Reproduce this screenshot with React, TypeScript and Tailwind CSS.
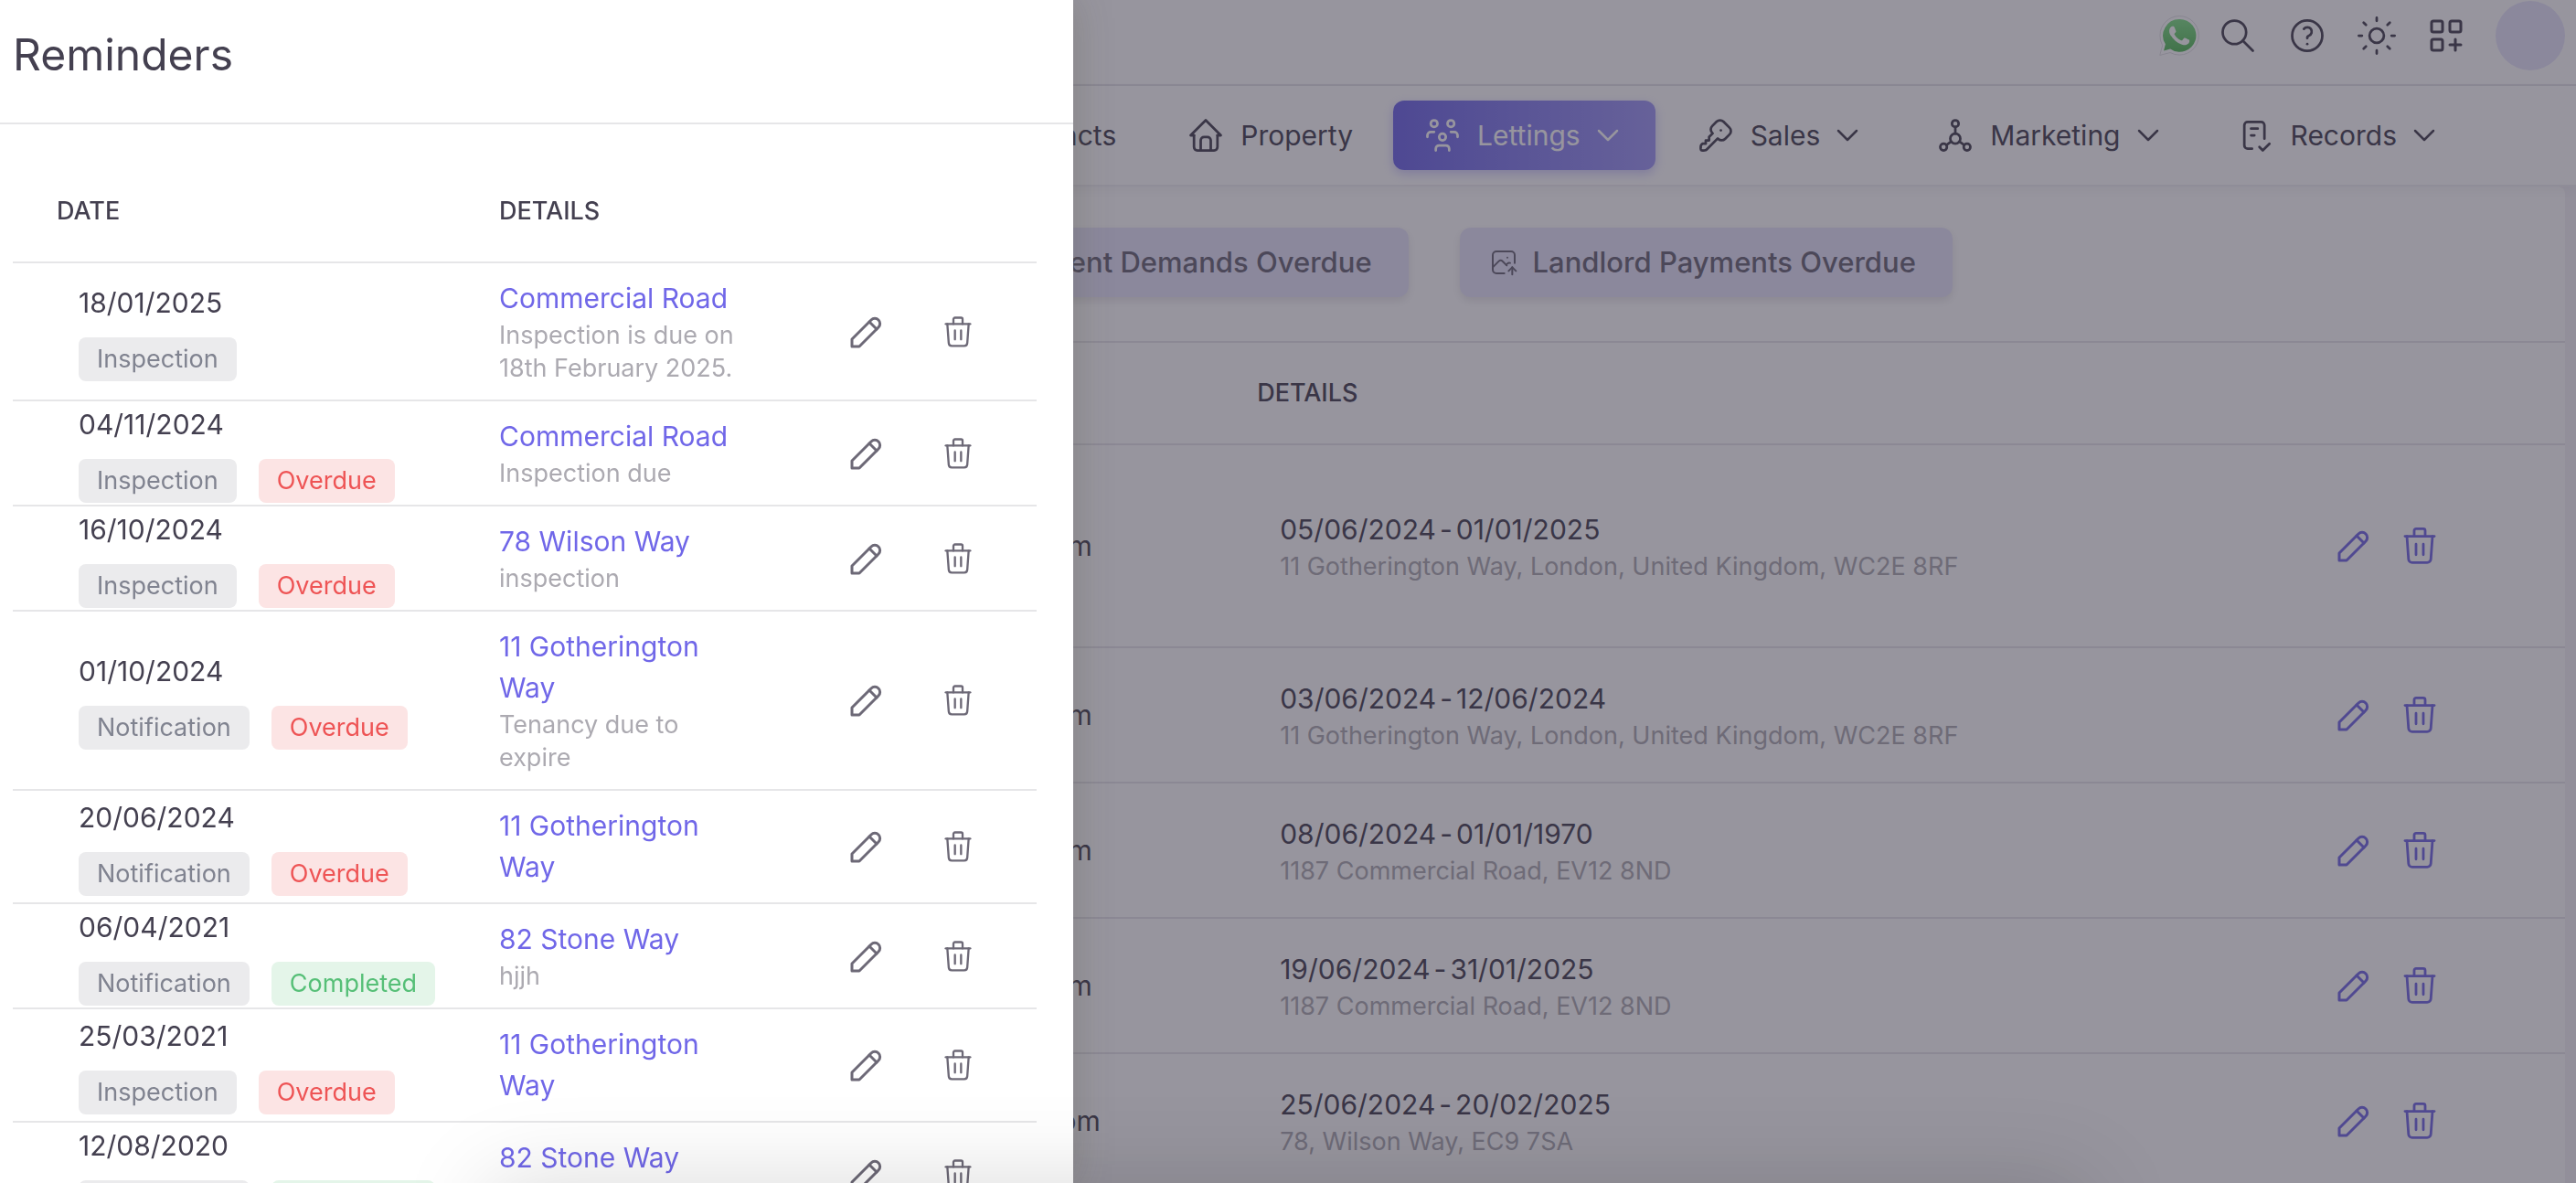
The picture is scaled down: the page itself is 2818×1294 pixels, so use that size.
import React from 'react';
import type { IconType } from 'react-icons';
import {
  TbAddressBook,
  TbChecklist,
  TbChevronDown,
  TbHelp,
  TbHome,
  TbKey,
  TbLayoutGridAdd,
  TbPencil,
  TbPhotoUp,
  TbSearch,
  TbSocial,
  TbUsersGroup,
} from 'react-icons/tb';

type Status = 'Overdue' | 'Completed';

interface Reminder {
  date: string;
  type: 'Inspection' | 'Notification';
  status?: Status;
  property: string;
  note?: string;
}

interface Tenancy {
  email: string;
  start: string;
  end: string;
  address: string;
  tall?: boolean;
}

interface NavItem {
  label: string;
  icon: IconType;
  menu?: boolean;
  active?: boolean;
}

const REMINDERS: Reminder[] = [
  { date: '18/01/2025', type: 'Inspection', property: 'Commercial Road', note: 'Inspection is due on 18th February 2025.' },
  { date: '04/11/2024', type: 'Inspection', status: 'Overdue', property: 'Commercial Road', note: 'Inspection due' },
  { date: '16/10/2024', type: 'Inspection', status: 'Overdue', property: '78 Wilson Way', note: 'inspection' },
  { date: '01/10/2024', type: 'Notification', status: 'Overdue', property: '11 Gotherington Way', note: 'Tenancy due to expire' },
  { date: '20/06/2024', type: 'Notification', status: 'Overdue', property: '11 Gotherington Way' },
  { date: '06/04/2021', type: 'Notification', status: 'Completed', property: '82 Stone Way', note: 'hjjh' },
  { date: '25/03/2021', type: 'Inspection', status: 'Overdue', property: '11 Gotherington Way' },
  { date: '12/08/2020', type: 'Notification', status: 'Completed', property: '82 Stone Way', note: 'test' },
];

const TENANCIES: Tenancy[] = [
  { email: 'emma.elliot@gmail.com', start: '05/06/2024', end: '01/01/2025', address: '11 Gotherington Way, London, United Kingdom, WC2E 8RF', tall: true },
  { email: 'emma.elliot@gmail.com', start: '03/06/2024', end: '12/06/2024', address: '11 Gotherington Way, London, United Kingdom, WC2E 8RF' },
  { email: 'emma.elliot@gmail.com', start: '08/06/2024', end: '01/01/1970', address: '1187 Commercial Road, EV12 8ND' },
  { email: 'emma.elliot@gmail.com', start: '19/06/2024', end: '31/01/2025', address: '1187 Commercial Road, EV12 8ND' },
  { email: 'emma.elliott@gmail.com', start: '25/06/2024', end: '20/02/2025', address: '78, Wilson Way, EC9 7SA' },
];

const NAV_ITEMS: NavItem[] = [
  { label: 'Contacts', icon: TbAddressBook },
  { label: 'Property', icon: TbHome },
  { label: 'Lettings', icon: TbUsersGroup, menu: true, active: true },
  { label: 'Sales', icon: TbKey, menu: true },
  { label: 'Marketing', icon: TbSocial, menu: true },
  { label: 'Records', icon: TbChecklist, menu: true },
];

const STATUS_STYLES: Record<Status, string> = {
  Overdue: 'bg-[#fce4e4] text-[#ee5455]',
  Completed: 'bg-[#e4f5e9] text-[#56bf77]',
};

const TrashIcon = ({ size }: { size: number }) => (
  <svg
    width={size}
    height={size}
    viewBox="0 0 24 24"
    fill="none"
    stroke="currentColor"
    strokeWidth="1.4"
    strokeLinecap="round"
    strokeLinejoin="round"
  >
    <path d="M9 6.8V3.7a1 1 0 0 1 1-1h4a1 1 0 0 1 1 1v3.1" />
    <path d="M4 6.8h16" />
    <path d="M5 6.8l.9 12.5a2 2 0 0 0 2 1.9h8.2a2 2 0 0 0 2-1.9L19 6.8" />
    <path d="M10 11.1v5.8M14 11.1v5.8" />
  </svg>
);

const SunIcon = () => (
  <svg
    width={44}
    height={44}
    viewBox="0 0 24 24"
    fill="none"
    stroke="currentColor"
    strokeWidth="1.5"
    strokeLinecap="round"
  >
    <circle cx="12" cy="12" r="4.3" />
    <path d="M12 1.3v1.9M12 20.8v1.9M1.3 12h1.9M20.8 12h1.9" />
    <path d="M4.2 4.2l1.4 1.4M18.4 18.4l1.4 1.4M4.2 19.8l1.4-1.4M18.4 5.6l1.4-1.4" />
  </svg>
);

const WhatsAppIcon = () => (
  <svg width={44} height={44} viewBox="0 0 24 24">
    <defs>
      <linearGradient id="wa" x1="0" y1="0" x2="0" y2="1">
        <stop offset="0" stopColor="#7ee084" />
        <stop offset="1" stopColor="#53b957" />
      </linearGradient>
    </defs>
    <path
      d="M.4 23.7l1.6-5.9a11.6 11.6 0 0 1-1.5-5.9C.5 5.5 5.7.3 12.05.3a11.6 11.6 0 0 1 11.6 11.6c0 6.4-5.2 11.6-11.6 11.6a11.6 11.6 0 0 1-5.5-1.4z"
      fill="#fff"
      stroke="#dddce0"
      strokeWidth=".5"
    />
    <path d="M12.05 2.2a9.75 9.75 0 0 0-8.3 14.9l-1 3.9 3.9-1.1a9.75 9.75 0 1 0 5.4-17.7z" fill="url(#wa)" />
    <path
      d="M17.472 14.382c-.297-.149-1.758-.867-2.03-.967-.273-.099-.471-.148-.67.15-.197.297-.767.966-.94 1.164-.173.199-.347.223-.644.075-.297-.15-1.255-.463-2.39-1.475-.883-.788-1.48-1.761-1.653-2.059-.173-.297-.018-.458.13-.606.134-.133.298-.347.446-.52.149-.174.198-.298.298-.497.099-.198.05-.371-.025-.52-.075-.149-.669-1.612-.916-2.207-.242-.579-.487-.5-.669-.51-.173-.008-.371-.01-.57-.01-.198 0-.52.074-.792.372-.272.297-1.04 1.016-1.04 2.479 0 1.462 1.065 2.875 1.213 3.074.149.198 2.096 3.2 5.077 4.487.709.306 1.262.489 1.694.625.712.227 1.36.195 1.871.118.571-.085 1.758-.719 2.006-1.413.248-.694.248-1.289.173-1.413-.074-.124-.272-.198-.57-.347"
      fill="#fff"
    />
  </svg>
);

const TopBar = () => (
  <header className="flex items-center justify-end border-b-2 border-[#e6e5ea] bg-white pt-px pr-3 pb-[15px]">
    <a href="#whatsapp" aria-label="WhatsApp" className="mr-1">
      <WhatsAppIcon />
    </a>
    <button aria-label="Search" className="flex h-[76px] w-[76px] items-center justify-center">
      <TbSearch size={44} strokeWidth={1.5} />
    </button>
    <button aria-label="Help" className="flex h-[76px] w-[76px] items-center justify-center">
      <TbHelp size={44} strokeWidth={1.5} />
    </button>
    <button aria-label="Toggle theme" className="flex h-[76px] w-[76px] items-center justify-center">
      <SunIcon />
    </button>
    <button aria-label="Shortcuts" className="flex h-[76px] w-[76px] items-center justify-center">
      <TbLayoutGridAdd size={48} strokeWidth={1.5} />
    </button>
    <button aria-label="Account" className="ml-4 h-[76px] w-[76px] rounded-full bg-[#e7e5fb]" />
  </header>
);

const MainNav = () => (
  <nav className="relative z-10 flex justify-end gap-3 border-b-2 border-[#efeef2] bg-white py-4 pr-[114px] shadow-[0_4px_12px_rgba(47,43,61,0.06)]">
    {NAV_ITEMS.map(({ label, icon: Icon, menu, active }) => (
      <a
        key={label}
        href={`#${label.toLowerCase()}`}
        className={`flex h-[76px] items-center rounded-xl px-8 text-[30px] ${
          active
            ? 'bg-linear-to-r from-[#6d65e8] to-[#9e97f5] text-white shadow-[0_4px_12px_rgba(115,103,240,0.35)]'
            : ''
        }`}
      >
        <Icon size={44} strokeWidth={1.5} />
        <span className="ml-4">{label}</span>
        {menu && <TbChevronDown size={40} strokeWidth={1.5} className="ml-[10px]" />}
      </a>
    ))}
  </nav>
);

const quickButton =
  'flex h-[76px] items-center gap-4 rounded-xl bg-[#e7e5fb] pl-8 pr-10 text-[31px] font-medium text-[#696575] shadow-[0_4px_10px_rgba(47,43,61,0.12)]';

const TenancyTable = () => (
  <table className="w-full table-fixed border-collapse text-left">
    <colgroup>
      <col className="w-[47%]" />
      <col />
      <col className="w-[440px]" />
    </colgroup>
    <thead>
      <tr className="h-[112px] border-y-2 border-[#e6e5ea]">
        <th aria-label="Contact" />
        <th className="pl-[50px] text-[27px] font-medium">DETAILS</th>
        <th aria-label="Actions" />
      </tr>
    </thead>
    <tbody>
      {TENANCIES.map((tenancy) => (
        <tr
          key={tenancy.start}
          className={`border-b-2 border-[#e6e5ea] ${tenancy.tall ? 'h-[222px]' : 'h-[148px]'}`}
        >
          <td className="pl-[845px] text-[30px]">{tenancy.email}</td>
          <td className="pl-[75px]">
            <div className="flex gap-1 text-[30px] leading-[45px]">
              <span>{tenancy.start}</span>
              <span>-</span>
              <span>{tenancy.end}</span>
            </div>
            <div className="text-[27px] leading-9 text-[#acaab1]">{tenancy.address}</div>
          </td>
          <td>
            <div className="flex justify-end gap-6 pr-[135px] text-[#7067e4]">
              <button aria-label="Edit tenancy">
                <TbPencil size={48} strokeWidth={1.5} />
              </button>
              <button aria-label="Delete tenancy">
                <TrashIcon size={48} />
              </button>
            </div>
          </td>
        </tr>
      ))}
    </tbody>
  </table>
);

const RemindersDrawer = () => (
  <aside
    aria-label="Reminders"
    className="fixed inset-y-0 left-0 z-30 w-5/12 overflow-hidden bg-white shadow-[0_0_40px_rgba(80,80,50,0.25)]"
  >
    <div className="border-b-2 border-[#e6e6e8] px-[14px] pt-6 pb-[38px]">
      <h2 className="text-[48px] leading-[72px]">Reminders</h2>
    </div>
    <div className="pt-10 pr-10 pl-[14px]">
      <table className="w-full table-fixed border-collapse text-left">
        <colgroup>
          <col className="w-[484px]" />
          <col />
          <col className="w-[272px]" />
        </colgroup>
        <thead>
          <tr className="h-[111px] border-b-2 border-[#e6e6e8] text-[27px]">
            <th className="pl-12 font-medium">DATE</th>
            <th className="pl-12 font-medium">DETAILS</th>
            <th aria-label="Actions" />
          </tr>
        </thead>
        <tbody>
          {REMINDERS.map((reminder) => (
            <tr key={reminder.date} className="border-b-2 border-[#e6e6e8]">
              <td className="pl-[72px]">
                <div className="text-[30px] leading-[45px]">{reminder.date}</div>
                <div className="mt-[15px] flex gap-6 text-[27px] leading-[48px]">
                  <span className="rounded-lg bg-[#ebebed] px-5 text-[#808390]">{reminder.type}</span>
                  {reminder.status && (
                    <span className={`rounded-lg px-5 ${STATUS_STYLES[reminder.status]}`}>{reminder.status}</span>
                  )}
                </div>
              </td>
              <td className="py-4 pr-12 pl-12">
                <a href="#property" className="block text-[30px] leading-[45px] text-[#7067e8]">
                  {reminder.property}
                </a>
                {reminder.note && (
                  <p className="text-[27px] leading-9 text-[#acaab1]">{reminder.note}</p>
                )}
              </td>
              <td>
                <div className="flex justify-end gap-6 pr-12 text-[#6d6977]">
                  <button aria-label="Edit reminder" className="flex w-[76px] justify-center">
                    <TbPencil size={48} strokeWidth={1.5} />
                  </button>
                  <button aria-label="Delete reminder" className="flex w-[76px] items-center justify-center">
                    <TrashIcon size={40} />
                  </button>
                </div>
              </td>
            </tr>
          ))}
        </tbody>
      </table>
    </div>
  </aside>
);

const App: React.FC = () => (
  <div className="h-screen overflow-hidden bg-[#f4f3f7] font-[Inter,sans-serif] text-[#444050]">
    <TopBar />
    <MainNav />
    <main className="mx-3 rounded-lg bg-white pt-[45px]">
      <div className="mb-12 flex justify-center gap-14">
        <button className={`${quickButton} w-[332px]`}>Expiring Soon</button>
        <button className={quickButton}>
          <TbPhotoUp size={32} strokeWidth={1.5} />
          Rent Demands Overdue
        </button>
        <button className={quickButton}>
          <TbPhotoUp size={32} strokeWidth={1.5} />
          Landlord Payments Overdue
        </button>
      </div>
      <TenancyTable />
    </main>

    {/* backdrop behind the drawer */}
    <div className="fixed inset-0 z-20 bg-[#2f2b3d]/50" />
    <RemindersDrawer />
    {/* soft shadow rising from the bottom edge */}
    <div className="pointer-events-none fixed top-full right-[19%] left-[19%] z-40 h-40 shadow-[0_0_100px_rgba(0,0,0,0.15)]" />
  </div>
);

export default App;
